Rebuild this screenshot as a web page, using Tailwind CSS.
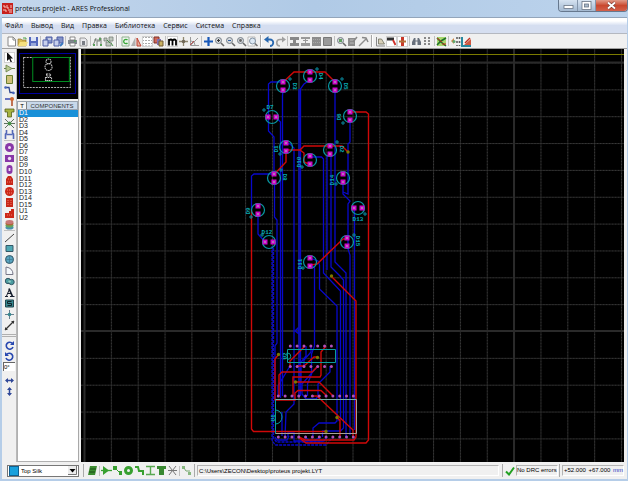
<!DOCTYPE html>
<html lang="ru">
<head>
  <meta charset="UTF-8">
  <meta name="viewport" content="width=device-width, initial-scale=1.0">
  <title>proteus projekt - ARES Professional</title>
  <script src="https://cdn.jsdelivr.net/npm/@tailwindcss/browser@4"></script>
</head>
<body class="flex h-screen flex-col overflow-hidden bg-[#b5cde8] pr-px pb-[2px] pl-[2px] font-['Liberation_Sans',sans-serif] text-[7px] leading-none text-black">

  <!-- Title bar -->
  <header class="-ml-[2px] -mr-px flex h-[17px] shrink-0 items-start justify-between bg-linear-to-r from-[#c3d6ec] via-[#b0cae6] to-[#bcd3ec] pl-[2px]">
    <div class="flex h-[17px] items-center gap-[2px]">
      <svg class="size-[11px]" viewBox="0 0 11 11"><rect width="11" height="11" fill="#c8201c"/><path d="M1 3h2v2M5 2v3h2M9 2v3M1 7h3v2M6 7h4M7 9h3" stroke="#f6c8c0" fill="none"/></svg>
      <h1 class="font-['Open_Sans',sans-serif] text-[7px] leading-[16px] font-medium whitespace-nowrap text-[#111]">proteus projekt - ARES Professional</h1>
    </div>
    <div class="flex h-[12px] overflow-hidden rounded-b-sm border border-t-0 border-[#66788e]">
      <button aria-label="Minimize" class="flex w-[19px] items-center justify-center border-r border-[#8496ac] bg-linear-to-b from-[#d6e3f1] to-[#a3b9d1]"><svg class="h-[9px] w-[11px]" viewBox="0 0 11 9"><rect x="1" y="4.500" width="9" height="3" fill="#fff" stroke="#6a7685" stroke-width=".8"/></svg></button>
      <button aria-label="Maximize" class="flex w-[18px] items-center justify-center border-r border-[#8496ac] bg-linear-to-b from-[#d6e3f1] to-[#a3b9d1]"><svg class="h-[9px] w-[11px]" viewBox="0 0 11 9"><rect x="1" y=".5" width="9" height="8" fill="#fff" stroke="#6a7685" stroke-width=".8"/><rect x="3.500" y="3" width="4" height="3" fill="#a9bacb" stroke="#6a7685" stroke-width=".8"/></svg></button>
      <button aria-label="Close" class="flex w-[31px] items-center justify-center bg-linear-to-b from-[#e09a88] via-[#c9482e] to-[#d4604a]"><svg class="h-[9px] w-[11px]" viewBox="0 0 11 9"><path d="M2 1.500l7 6M9 1.500l-7 6" stroke="#7d4038" stroke-width="3"/><path d="M2 1.500l7 6M9 1.500l-7 6" stroke="#fff" stroke-width="1.800"/></svg></button>
    </div>
  </header>

  <!-- Menu -->
  <nav class="flex h-[16px] shrink-0 items-center gap-[8px] border-t border-[#93a5ba] bg-linear-to-b from-white from-20% to-[#d5def0] to-50% pl-[3px] font-['Open_Sans',sans-serif] text-[7px] font-medium text-[#111]">
    <a href="#">Файл</a>
    <a href="#">Вывод</a>
    <a href="#">Вид</a>
    <a href="#">Правка</a>
    <a href="#">Библиотека</a>
    <a href="#">Сервис</a>
    <a href="#">Система</a>
    <a href="#">Справка</a>
  </nav>

  <!-- Toolbar -->
  <div id="toolbar" class="flex h-[16px] shrink-0 items-center border-t border-[#b4b8c0] border-b border-b-[#a0a0a0] bg-[#f0f0f0] pl-[4px]"></div>

  <main class="flex min-h-0 flex-1 bg-[#f0f0f0]">
    <!-- Mode buttons -->
    <div id="modes" class="flex w-[15px] shrink-0 flex-col items-center border-r border-[#b8b8b8] pt-[3px]"></div>

    <!-- Overview and component list -->
    <aside class="flex w-[62px] shrink-0 flex-col border-r border-[#a8a8a8]">
      <svg class="h-[50px] w-full shrink-0 bg-black" viewBox="0 0 60 50" preserveAspectRatio="none">
        <rect x="2.500" y="4.500" width="55" height="40" fill="none" stroke="#0000a0"/>
        <rect x="6.500" y="8.500" width="46" height="30" fill="none" stroke="#b0b0b0" stroke-dasharray="2 1"/>
        <rect x="15.500" y="8.500" width="36" height="24" fill="none" stroke="#008c20"/>
        <g fill="none" stroke="#c8c8c8" stroke-width="1" stroke-dasharray="1.500 .6"><circle cx="31" cy="12.500" r="2.500"/><circle cx="31" cy="18" r="3.500"/><path d="M29 25h4v2h-4zM28 28.500h6v3h-6z"/></g>
      </svg>
      <div class="mt-[2px] flex h-[9px] shrink-0 items-stretch border border-[#9aa4b0] bg-[#c8d8ea]">
        <button class="w-[9px] border-r border-[#808080] bg-[#f4f4f4] text-[6px]">T</button>
        <h2 class="flex-1 text-center text-[6px] leading-[8px] text-[#333]">COMPONENTS</h2>
      </div>
      <div class="min-h-0 flex-1 border-b border-l border-[#b0b0b0] bg-white">
        <ul id="parts" class="grid h-[111px] auto-rows-fr"></ul>
      </div>
    </aside>

    <!-- Board -->
    <div class="ml-[2px] min-w-0 flex-1 overflow-hidden bg-black">
      <svg class="h-full w-full font-['Liberation_Mono',monospace]" fill="none">
        <defs>
          <pattern id="grid" x="84" y="62.500" width="26.850" height="26.850" patternUnits="userSpaceOnUse">
            <path d="M0 .5h26.850M.5 0v26.850" stroke="#242424"/>
            <path d="M0 .5h26.850M.5 0v26.850" stroke="#3c3c3c" stroke-dasharray="1 2"/>
          </pattern>
        </defs>
        <g transform="translate(-81 -49)">
          <rect x="81" y="49" width="2000" height="2000" fill="url(#grid)"/>
          <path d="M84.500 49v2000M299 49v2000M514 49v2000M81 62.500h2000M81 331h2000" stroke="#2a2a2a" stroke-width="2"/>
          <path d="M81 54.500h2000" stroke="#7c7c00"/>
          <!-- bottom copper -->
          <g stroke="#0808cc" stroke-width="1.300">
            <path d="M283 82h-12l-2.500 2v47l5.500 6v36M274.500 181v36l2.500 3v123l-2 3v54"/>
            <path d="M275.500 117l5 5v276M283 90l-.5 6v300M286 143l4 1 4 4v256l-8 8-1 25"/>
            <path d="M310 80l-6 4-3.500 5v307M299 89v307"/>
            <path d="M335 90v172l11 11v164M350 120v22l-2 2v50l-5-2"/>
            <path d="M331 153v114l9 9 3.500 4v148l-3 3h-18v6"/>
            <path d="M309.500 157h12l2 2v114l17 18v128l-2 2"/>
            <path d="M343 181v13l7 7-2 3v45l2 6v180M354.500 208v222"/>
            <path d="M327 155v115M274 174h-20l-2.500 2v34M258 214v20l7 8"/>
            <path d="M310 258l8 3 1.500 4v24l17.500 17v115l-2 2h-16l-6 5v8"/>
            <path d="M311 265l3.500 3v78l-3 8v20l-4 10v12"/>
            <path d="M298 328l-3 3 4 3zM298 366l8-10v-10M304 366v-6l7-8v-6M318 366l-16 18v10l4 5h10l2-3V384l12-12v-6"/>
            <path d="M301 366v24M290 366l-12 20v10M282 412v24M288 437v-4h6v8h30l3-4M275 437l2 3h10l2-4M305 437l6 5 10-5"/>
            <path d="M272 246v194l3 5h51l7-8M273.500 248v190l3 4h46" stroke-dasharray="3 1"/>
          </g>
          <!-- top copper -->
          <g stroke="#d00808" stroke-width="1.400">
            <path d="M283.300 82L294 72h31l10 10M350 112h16l2.500 2v326l-2.500 3h-60l-8-6"/>
            <path d="M331 276l25 25v136l-2 3h-49l-6-3M286 150h14l4-4h38l6 6M300 150l4 3v9l5 2M286 150v12l-11.500 12"/>
            <path d="M251.500 210v219l2 2.500h72M347 239h-4l-26 25-6 1"/>
            <path d="M278.500 354.500l-3.500 4.500v41h20v-7l3-2.500h23l6 5.500M279 396v-21l3-3h30l6-6M293 396v-19h27l1-2v-23l5-6"/>
            <path d="M295 382h24l14 14M313 396h4l36 34v6M337 417.500l3 3v16M290 366v-5l15-15M297 366h7l10-9h4"/>
          </g>
          <g fill="#7c7800"><circle cx="348" cy="152" r="1.700"/><circle cx="331.500" cy="276" r="1.700"/><circle cx="278.500" cy="354.500" r="1.700"/><circle cx="317.500" cy="357.500" r="1.700"/><circle cx="295.500" cy="382" r="1.700"/><circle cx="337" cy="417.500" r="1.700"/><circle cx="326" cy="431.500" r="1.700"/></g>
          <!-- silk -->
          <path d="M287.500 349.500h48v13h-48zM287.500 353a3 3 0 0 1 0 6.500M275.500 399.500v34M275.500 410a6.500 7 0 0 1 0 14" stroke="#0a9c9c"/>
          <path d="M275.500 399.500h81" stroke="#7ab0a8"/><path d="M275.500 433.500h81v-34" stroke="#a8a098"/>
          <g id="silk"></g>
        </g>
      </svg>
    </div>
    <div class="w-[3px] shrink-0"></div>
  </main>

  <!-- Status bar -->
  <footer class="flex h-[17px] shrink-0 items-center bg-[#f0f0f0] pr-[3px] pl-[5px] text-[6px]">
    <div class="relative flex h-[12px] w-[72px] shrink-0 items-center border border-[#777] bg-white">
      <span class="ml-px size-[10px] shrink-0 border border-[#106090] bg-[#18a0dc]"></span>
      <select aria-label="Layer" class="h-full min-w-0 flex-1 appearance-none bg-transparent pl-[2px] text-[6px] leading-[10px]">
        <option>Top Silk</option>
        <option>Bottom Silk</option>
      </select>
      <svg class="pointer-events-none absolute right-px size-[9px] bg-[#ececec]" viewBox="0 0 9 9"><path d="M1.500 3h6l-3 3.500z" fill="#000"/><path d="M0 8.500h8.500V0" stroke="#777" fill="none"/></svg>
    </div>
    <div id="filters" class="ml-[4px] flex h-[13px] shrink-0 items-center border-l border-[#aaa] pl-[3px]"></div>
    <div class="ml-[2px] h-[11px] min-w-0 flex-1 truncate border border-[#b4b4b4] border-r-white border-b-white pl-px leading-[10px]">C:\Users\ZECON\Desktop\proteus projekt.LYT</div>
    <div class="ml-[3px] flex h-[13px] w-[54px] shrink-0 items-center gap-px border-l border-[#aaa] pl-[2px]">
      <svg class="size-[10px] shrink-0" viewBox="0 0 10 10"><path d="M1 5.500L4 8.500L9 1.500" stroke="#22a022" stroke-width="2" fill="none"/></svg>
      <span class="flex-1 border border-[#b4b4b4] border-r-white border-b-white leading-[9px] whitespace-nowrap">No DRC errors</span>
    </div>
    <div class="ml-[3px] flex h-[13px] w-[65px] shrink-0 items-center border-l border-[#aaa] pl-[2px]">
      <div class="flex flex-1 justify-between border border-[#b4b4b4] border-r-white border-b-white pl-px leading-[9px]"><span>+52.000</span><span>+67.000</span><span class="text-[#2030c0]">mm</span></div>
    </div>
  </footer>

  <script>
    const lens = '<circle cx="4.500" cy="4.500" r="3" fill="#d4d8dc" stroke="#788088"/><path d="M7 7l3 3" stroke="#686868" stroke-width="1.600"/>';
    const rotate = '<path d="M8.500 3.500A3.500 3.500 0 1 0 9 7" stroke="#2848b0" stroke-width="1.600" fill="none"/><path d="M10 1v4H6z" fill="#2848b0"/>';
    const disk = '<path d="M1 1h9v9H1z" fill="#5468bc"/><path d="M3 1h5v4H3z" fill="#dde4f4"/><path d="M3 7h5v3H3z" fill="#98a8d8"/>';
    const blocks = '<path d="M4 1h6v6H4z" fill="#8494c8" stroke="#4c5ca4"/><path d="M1 4h5v6H1z" fill="#c8d0ec" stroke="#4c5ca4"/>';
    const tee = '<path d="M1 2h9v3H7.500v5h-4V5H1z" fill="#a8b440" stroke="#566020" stroke-width=".8"/>';
    const icons = {
      'New': '<path d="M2 1h5l2.500 2.500V10H2z" fill="#fff" stroke="#888"/><path d="M7 1v3h2.500" stroke="#888" fill="none"/>',
      'Open': '<path d="M1 3h3l1 1h4v6H1z" fill="#d8b850" stroke="#8c7430" stroke-width=".7"/><path d="M3 6h8l-2 4H1z" fill="#f4e080"/><path d="M6 2h3v1.500" stroke="#48a048" fill="none"/>',
      'Save': disk,
      'Import region': blocks + '<path d="M6 3h3" stroke="#fff"/>',
      'Export region': blocks + '<path d="M7 10l3-3" stroke="#3878c0" stroke-width="2"/>',
      'Print': '<path d="M1 4h9v4H1z" fill="#808890"/><path d="M3 1h5v3H3zM3 7h5v3H3z" fill="#fff" stroke="#707070" stroke-width=".8"/><path d="M7 5h2" stroke="#48b048"/>',
      'Mark output area': '<path d="M2 2h5l2 2v6H2z" fill="#e8e8ec" stroke="#888" stroke-width=".8"/><path d="M4 5h3v4H4z" fill="#787c84"/>',
      'Via filter': '<path d="M1 9l2-4 1-3M5 10V5h3V1M9 2v7M2 4h7" stroke="#788078" fill="none"/><path d="M1 8h2v2H1zM7 2h2v2H7zM8 8h2v2H8z" fill="#58a058"/>',
      'Find net': '<path d="M1 2h3v3H1zM6 1h4v4H6zM3 6h5v4H3z" fill="#c0c8c0" stroke="#788078" stroke-width=".8"/><path d="M4 4l3 3M8 7l2 3" stroke="#489048"/>',
      'Redraw': '<path d="M2 1h7v9H2z" fill="#eef6ee" stroke="#90b090"/><path d="M7.500 4A2.200 2.200 0 1 0 7.500 7" stroke="#38a838" stroke-width="1.300" fill="none"/>',
      'Flip': '<path d="M4.500 1v9H0z" fill="#b0b0b0"/><path d="M6 2v8h4z" fill="#e0b0a0" stroke="#c04030"/>',
      'Grid': '<path d="M.5 1.500h10M.5 4.500h10M.5 7.500h10M.5 10h10" stroke="#555" stroke-dasharray="1 2"/>',
      'Layers': '<path d="M1 1h5v6H1z" fill="#d06858" stroke="#803028"/><path d="M4 3h4v6H4z" fill="#8070b0"/><path d="M6 5h4v5H6z" fill="#c8b060" stroke="#705830"/>',
      'Metric': '<path d="M2 9.500V3M2 4.500q2-2 3.500 0v5M5.500 4.500q2-2 3.500 0v5" stroke="#000" stroke-width="1.800" fill="none"/>',
      'Origin': '<path d="M5.500 1v9M1 5.500h9" stroke="#908870" stroke-width="1.300"/><circle cx="5.500" cy="5.500" r="1.800" fill="#706858"/>',
      'Polar': '<path d="M1.500 1v8.500H10M2 9l7-7M2 5q4 0 4 4" stroke="#999" fill="none"/><path d="M1 9l4-4" stroke="#c05050"/>',
      'Pan': '<path d="M5.500 1v9M1 5.500h9" stroke="#1858b8" stroke-width="2.200"/>',
      'Zoom in': lens + '<path d="M3 4.500h3M4.500 3v3" stroke="#333"/>',
      'Zoom out': lens + '<path d="M3 4.500h3" stroke="#3060a0"/>',
      'Zoom all': lens + '<circle cx="4.500" cy="4.500" r="1.400" fill="#666"/>',
      'Zoom area': '<path d="M1 1h7v9H1z" fill="#fff" stroke="#aaa" stroke-width=".8"/><circle cx="5.500" cy="5" r="3" fill="#dce8f4" stroke="#8090a0"/><path d="M8 7.500l2.500 2.500" stroke="#707070" stroke-width="1.500"/>',
      'Undo': '<path d="M3 3.500h3a3 3 0 0 1 0 6.500" stroke="#2868b0" stroke-width="1.800" fill="none"/><path d="M0 3.500L4.500 0v7z" fill="#2868b0"/>',
      'Redo': '<path d="M8 3.500H5a3 3 0 0 0 0 6.500" stroke="#a0a0a0" stroke-width="1.600" fill="none"/><path d="M11 3.500L7 .5v6z" fill="#a0a0a0"/>',
      'Block copy': '<path d="M1 1h9v3H1zM1 7h9v3H1zM4 3h3v5H4z" fill="#888"/>',
      'Block move': '<path d="M1 1h9v2H1zM1 7h9v3H1zM5 3h1v5H5zM3 4h5v1H3z" fill="#999"/>',
      'Block rotate': '<path d="M1 1h9v9H1z" fill="#8c8c8c"/><path d="M2 3.500h7M2 6.500h7" stroke="#a8a8a8" stroke-dasharray="1 1"/>',
      'Block delete': '<path d="M1.500 1.500h8v8h-8z" fill="#999" stroke="#777"/>',
      'Pick': lens + '<path d="M3 3h3v3H3z" fill="#60a060"/>',
      'Make package': '<path d="M1 2h7v8H1z" fill="#8c8c8c"/><path d="M3 4h5M3 7h4" stroke="#bbb"/><path d="M6 6l4-5" stroke="#888" stroke-width="1.500"/>',
      'Decompose': '<path d="M1 10l7-7" stroke="#909090" stroke-width="1.500"/><path d="M4 1.500l4 .5 2 4" stroke="#888" stroke-width="1.500" fill="none"/>',
      'Trace angle lock': '<path d="M1.500 1v9H10" stroke="#888" fill="none"/><path d="M3.500 3h3l3 5h-6z" fill="#d8d0b8" stroke="#707060" stroke-width=".8"/>',
      'Auto track necking': '<path d="M1 3h7" stroke="#303030" stroke-width="3"/><path d="M7 4l2.500 5" stroke="#d03028" stroke-width="1.800" fill="none"/>',
      'Auto trace style': '<path d="M5.500 0v11" stroke="#c83828" stroke-width="3"/><path d="M2 5.500h7" stroke="#b07038" stroke-width="2"/>',
      'Search and tag': '<path d="M1 9V6l2-4h1.500v7zM10 9V6L8 2H6.500v7z" fill="#68707c"/><path d="M4 5h3" stroke="#68707c"/>',
      'Name generator': '<path d="M3 1v9M7 1v9" stroke="#888" stroke-width="2" stroke-dasharray="2 1"/>',
      'Auto-router': '<path d="M1 1h9v9H1z" fill="#a8d870"/><path d="M1 2l4 4 5 4M1 9l4-4 5-3" stroke="#207028" stroke-width="1.600" fill="none"/><path d="M1 2l5 4M6 8h4" stroke="#d03020"/>',
      'Connectivity': '<path d="M1 5l3-3v6z" fill="#d08848"/><circle cx="4" cy="5.500" r="1.500" fill="#60a870"/><path d="M7 1v9M9.500 1v9" stroke="#606060" stroke-width="1.600" stroke-dasharray="2 2"/>',
      'Design rules': '<path d="M1 1v9h9" stroke="#2888a0" stroke-width="2" fill="none"/><path d="M3 9l7-6v6z" fill="#d05840"/><path d="M4 7l5-5" stroke="#c03020" stroke-width="1.500"/>',
      'Selection': '<path d="M3 0v9l2.200-2 1.500 3.500 1.300-.6L6.500 6.500H9z" fill="#111"/>',
      'Component': '<path d="M2 2l6 3.500L2 9z" fill="#b8c890" stroke="#688048" stroke-width=".8"/><path d="M0 5.500h2M8 5.500h3" stroke="#688048"/>',
      'Package': '<path d="M2.500 1.500h6v8h-6z" fill="#d0c078" stroke="#688030"/>',
      'Track': '<path d="M1 2.500h4l1 5h4" stroke="#304890" stroke-width="1.300" fill="none"/><circle cx="1.500" cy="2.500" r="1.300" fill="#4868c0"/><circle cx="9.500" cy="8" r="1.300" fill="#4868c0"/>',
      'Via': '<path d="M1 3h6" stroke="#3848b0" stroke-width="1.500"/><path d="M8 3v7" stroke="#b04820" stroke-width="1.500"/><circle cx="8" cy="3" r="2" fill="#d06830"/>',
      'Zone': tee,
      'Ratsnest': '<path d="M1 1l9 9M10 1l-9 9M0 5.500h11" stroke="#607060"/><circle cx="5.500" cy="5.500" r="2" fill="#489048"/>',
      'Connectivity highlight': '<path d="M2.500 1v3l-1 1v5M8.500 1v3l1 1v5M2.500 5.500h6" stroke="#5468b8" stroke-width="1.600" fill="none"/>',
      'Round pad': '<circle cx="5.500" cy="5.500" r="4.500" fill="#8838a8"/><circle cx="5.500" cy="5.500" r="1.500" fill="#f0e0f4"/>',
      'Square pad': '<path d="M1 2h9v7H1z" fill="#8838a8"/><circle cx="5.500" cy="5.500" r="1.700" fill="#f0e0f4"/>',
      'DIL pad': '<rect x="2.500" y="1" width="6" height="9" rx="3" fill="#8838a8"/><path d="M5.500 4v3" stroke="#f0e0f4" stroke-width="1.800"/>',
      'Edge pad': '<path d="M2 10V4l2-3h3l2 3v6z" fill="#c82818"/><path d="M4 4h3M3 7h5" stroke="#e87868" stroke-dasharray="1 1"/>',
      'Round SMT pad': '<circle cx="5.500" cy="5.500" r="4.500" fill="#cc2818"/><path d="M3 4h5M3 7h5" stroke="#ec8474" stroke-dasharray="1 1"/>',
      'Square SMT pad': '<path d="M2 1h7v9H2z" fill="#c82818"/><path d="M4 3v6M7 3v6" stroke="#e87868" stroke-dasharray="1 1"/>',
      'Polygon pad': '<path d="M1 10V5h4V3h2V1h3v9z" fill="#cc2818"/><path d="M3 7h6" stroke="#e87868" stroke-dasharray="1 1"/>',
      'Pad stack': '<ellipse cx="5.500" cy="8.500" rx="4" ry="2" fill="#4890b0"/><ellipse cx="5.500" cy="6.500" rx="4" ry="2" fill="#60a860"/><ellipse cx="5.500" cy="4.500" rx="4" ry="2" fill="#b06838"/><ellipse cx="5.500" cy="3" rx="4" ry="2" fill="#c87878"/>',
      'Line': '<path d="M1 10l9-8" stroke="#444"/>',
      'Box': '<path d="M2 2.500h7v6H2z" fill="#50a8b4" stroke="#345868"/>',
      'Circle': '<circle cx="5.500" cy="5.500" r="4" fill="#58a4c0" stroke="#345868"/><path d="M5.500 2v7M2 5.500h7" stroke="#3c7890" stroke-width=".7"/>',
      'Arc': '<path d="M2 2q7 1 7 7.500H2z" fill="#f4f8fc" stroke="#778"/>',
      'Path': '<circle cx="4" cy="5" r="2.700" fill="#4c9ca0" stroke="#345868"/><circle cx="7.500" cy="6" r="2.700" fill="#4c9ca0" stroke="#345868"/><circle cx="5.500" cy="5.500" r="1.300" fill="#90d0c8"/>',
      'Text': '<path d="M1 9.500h3M6 9.500h4.500M2.500 9l3-7M3.500 6.500h4" stroke="#182030" stroke-width="1"/><path d="M5 1.500l3.500 8" stroke="#182030" stroke-width="1.800"/>',
      'Symbol': '<path d="M1.500 2h8v7h-8z" fill="#388890" stroke="#204850"/><path d="M7.500 3.500h-4v2h4v2h-4" stroke="#102028" fill="none"/>',
      'Marker': '<path d="M5.500 1v9M1 5.500h9" stroke="#688090"/><circle cx="5.500" cy="5.500" r="1.800" fill="#388890"/>',
      'Dimension': '<path d="M1 10l9-9" stroke="#333" stroke-width="1.200"/><path d="M1 7l3 3H1zM7 1h3v3z" fill="#333"/>',
      'Rotate right': rotate,
      'Rotate left': '<g transform="matrix(-1 0 0 1 11 0)">' + rotate + '</g>',
      'Mirror X': '<path d="M2 5.500h7" stroke="#304898" stroke-width="1.500"/><path d="M1 5.500l3-2.500v5zM10 5.500L7 3v5z" fill="#304898"/>',
      'Mirror Y': '<path d="M5.500 2v7" stroke="#304898" stroke-width="1.500"/><path d="M5.500 1L3 4h5zM5.500 10L3 7h5z" fill="#304898"/>',
      'Layer pair': '<path d="M3 1h7L8 10H1z" fill="#3c8c30"/><path d="M3 4h6M2 7h6" stroke="#184c14"/>',
      'Components filter': '<path d="M2 1l6 4.500L2 10z" fill="#38a030"/><path d="M0 5.500h11" stroke="#38a030" stroke-width="1.300"/>',
      'Graphics filter': '<path d="M1 1h4v4H1zM7 6h3v4H7z" fill="#38a030"/><path d="M4 4l4 4" stroke="#38a030"/>',
      'Pads filter': '<circle cx="5.500" cy="5.500" r="3" fill="none" stroke="#38a030" stroke-width="3"/>',
      'Tracks filter': '<path d="M1 2h3l1 4h4v4" stroke="#38a030" stroke-width="2" fill="none"/>',
      'Vias filter': '<path d="M1 1.500h9M1 9.500h9M5.500 2v7" stroke="#58a850" stroke-width="1.400"/>',
      'Zones filter': '<path d="M1 1h9v3H8v6H3V4H1z" fill="#388830"/>',
      'Ratsnest filter': '<path d="M2 1l7 9M9 1l-7 9M1 5.500h9" stroke="#777"/>',
      'Net filter': '<path d="M1 1h3v3H1zM7 7h3v3H7z" fill="#88b880"/><path d="M3 3l2 3h4" stroke="#78a870" fill="none"/>'
    };
    const pressed = ['Grid', 'Metric', 'Auto track necking', 'Auto trace style', 'Selection'];

    function button(name) {
      const state = pressed.includes(name) ? 'bg-white outline outline-[#d0d0d0] -outline-offset-1' : '';
      return `<button aria-label="${name}" class="size-[11px] shrink-0 ${state}"><svg class="size-[11px]" viewBox="0 0 11 11">${icons[name]}</svg></button>`;
    }

    // '|' is a thin divider, '||' the edge of a new bar
    const toolbar = ['New', 'Open', 'Save', '|', 'Import region', 'Export region', '|', 'Print', 'Mark output area', '|', 'Via filter', 'Find net', '||',
      'Redraw', 'Flip', 'Grid', 'Layers', '|', 'Metric', 'Origin', 'Polar', '|', 'Pan', 'Zoom in', 'Zoom out', 'Zoom all', 'Zoom area', '||',
      'Undo', 'Redo', '|', 'Block copy', 'Block move', 'Block rotate', 'Block delete', '|', 'Pick', 'Make package', 'Decompose', '||',
      'Trace angle lock', 'Auto track necking', 'Auto trace style', '|', 'Search and tag', 'Name generator', '|', 'Auto-router', '|', 'Connectivity', 'Design rules'];
    document.getElementById('toolbar').innerHTML = toolbar.map(name => {
      if (name === '|') return '<span class="mx-px h-[10px] w-px shrink-0 bg-[#c0c0c0]"></span>';
      if (name === '||') return '<span class="mx-[2px] h-[12px] w-[2px] shrink-0 border-l border-[#a8a8a8] bg-white"></span>';
      return button(name);
    }).join('');

    const modes = ['Selection', 'Component', 'Package', 'Track', 'Via', 'Zone', 'Ratsnest', 'Connectivity highlight', '|',
      'Round pad', 'Square pad', 'DIL pad', 'Edge pad', 'Round SMT pad', 'Square SMT pad', 'Polygon pad', 'Pad stack', '|',
      'Line', 'Box', 'Circle', 'Arc', 'Path', 'Text', 'Symbol', 'Marker', 'Dimension', '||', 'Rotate right', 'Rotate left', 'angle', 'Mirror X', 'Mirror Y'];
    document.getElementById('modes').innerHTML = modes.map(name => {
      if (name === '|') return '<span class="mb-px h-px w-[11px] shrink-0 bg-[#c0c0c0]"></span>';
      if (name === '||') return '<span class="my-[3px] h-[3px] w-full shrink-0 border-y border-[#b0b0b0]"></span>';
      if (name === 'angle') return '<input aria-label="Angle" value="0°" class="mb-[4px] h-[9px] w-[12px] shrink-0 border-t border-l border-[#666] bg-white text-[6px] leading-none">';
      return button(name);
    }).join('');

    document.getElementById('filters').innerHTML = button('Layer pair') + '<span class="mx-px h-[10px] w-px bg-[#c0c0c0]"></span>' +
      ['Components filter', 'Graphics filter', 'Pads filter', 'Tracks filter', 'Vias filter', 'Zones filter', 'Ratsnest filter'].map(button).join('') +
      '<span class="mx-px h-[10px] w-px bg-[#c0c0c0]"></span>' + button('Net filter') + '<span class="ml-[2px] h-[13px] w-px bg-[#aaa]"></span>';

    const parts = ['D1', 'D2', 'D3', 'D4', 'D5', 'D6', 'D7', 'D8', 'D9', 'D10', 'D11', 'D12', 'D13', 'D14', 'D15', 'U1', 'U2'];
    document.getElementById('parts').innerHTML = parts.map((part, i) =>
      `<li class="flex min-h-0"><button class="w-full pl-px text-left text-[7px] leading-[6px] ${i === 0 ? 'bg-[#1890d8] text-white' : 'text-[#222]'}">${part}</button></li>`
    ).join('');

    // LEDs: x, y, pad direction, label, label x, label y, label angle, anode mark x, y
    const leds = [
      [283, 86, 'v', 'D3', 295, 86, 90, 290, 79], [310, 76, 'v', 'D4', 321, 76, 90, 317, 69], [335, 86, 'v', 'D5', 346, 86, 90, 342, 79],
      [272, 117, 'h', 'D7', 270, 107, 0, 264, 110], [350, 116, 'v', 'D6', 339, 117, -90, 343, 123], [286, 147, 'v', 'D1', 276, 149, -90, 280, 154],
      [310, 160, 'v', 'D10', 299, 162, -90, 302, 167], [330, 150, 'v', 'D2', 342, 149, 90, 337, 142], [274, 178, 'v', 'D8', 285, 177, 90, 281, 170],
      [343, 178, 'v', 'D14', 332, 180, -90, 336, 184], [258, 210, 'v', 'D9', 248, 211, -90, 251, 217], [358, 208, 'h', 'D13', 358, 219, 0, 365, 214],
      [269, 242, 'h', 'D12', 267, 232, 0, 262, 235], [347, 242, 'v', 'D15', 358, 241, 90, 354, 235], [310, 262, 'v', 'D11', 300, 264, -90, 303, 268]
    ];
    let silk = '';
    function label(text, x, y, angle) {
      return `<text transform="translate(${x} ${y}) rotate(${angle})" y="2" text-anchor="middle" font-size="6" font-weight="bold" fill="#08a8b4">${text}</text>`;
    }
    for (const [x, y, dir, name, lx, ly, angle, px, py] of leds) {
      const dx = dir === 'h' ? 4 : 0, dy = dir === 'v' ? 4 : 0;
      silk += `<circle cx="${x}" cy="${y}" r="6.500" stroke="#0898a4" stroke-width="1.200"/>`;
      for (const s of [-1, 1]) {
        silk += `<rect x="${x + s * dx - 2.5}" y="${y + s * dy - 2.5}" width="5" height="5" fill="#cc08c8"/><circle cx="${x + s * dx}" cy="${y + s * dy}" r="1" fill="#b090b8"/>`;
      }
      silk += `<path d="M${px - 2} ${py}h4M${px} ${py - 2}v4" stroke="#08889c"/>` + label(name, lx, ly, angle);
    }
    silk += label('U2', 285, 356, -90) + label('U1', 273, 418, -90);
    function pins(x, y, step, count) {
      for (let i = 0; i < count; i++) silk += `<circle cx="${x + i * step}" cy="${y}" r="1.500" fill="#b050b8"/>`;
    }
    pins(290.3, 346, 6.85, 7);
    pins(290.3, 366.5, 6.85, 7);
    pins(278.3, 396, 6.82, 12);
    pins(278.3, 437, 6.82, 12);
    document.getElementById('silk').innerHTML = silk;
  </script>
</body>
</html>
